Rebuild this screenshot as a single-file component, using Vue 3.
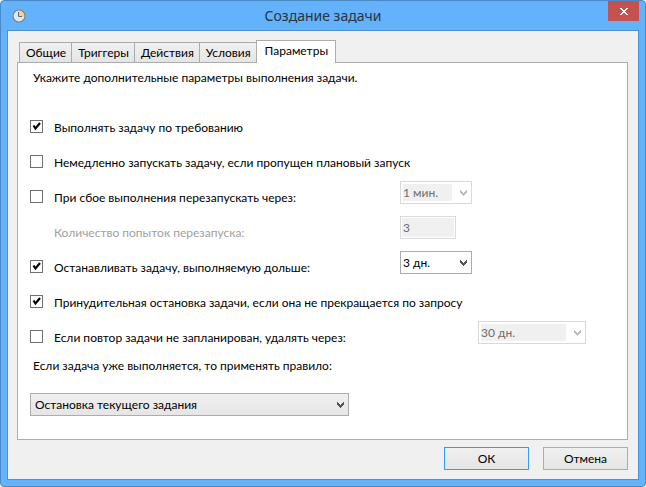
<script setup>
import { ref } from 'vue'

const tabs = ['Общие', 'Триггеры', 'Действия', 'Условия', 'Параметры']
const activeTab = ref('Параметры')

const onDemand = ref(true)
const runMissed = ref(false)
const restart = ref(false)
const stopLong = ref(true)
const forceStop = ref(true)
const removeTask = ref(false)

const restartEvery = ref('1 мин.')
const restartCount = ref('3')
const stopAfter = ref('3 дн.')
const removeAfter = ref('30 дн.')
const rule = ref('Остановка текущего задания')

const arrow = 'M0 0h1v1h1v1h1v1h1v-1h1v-1h1v-1h1v3h-1v1h-1v1h-1v1h-1v-1h-1v-1h-1v-1h-1z'
</script>

<template>
  <div class="window">
    <header class="titlebar">
      <svg class="clock" viewBox="0 0 14 14" aria-hidden="true">
        <circle cx="7" cy="7" r="6" fill="#dfe8ee" stroke="#85827c" stroke-width="1.2" />
        <path d="M7 7.500V1.800a5.200 5.200 0 0 1 5.200 5.700z" fill="#fbd07c" />
        <path d="M6.500 3v4.500H10" fill="none" stroke="#5b6a76" stroke-width="1" />
      </svg>
      <h1>Создание задачи</h1>
      <button class="close" type="button" aria-label="Закрыть">
        <svg viewBox="0 0 8 7" shape-rendering="crispEdges" aria-hidden="true">
          <path d="M0 0h2v1h1v1h2v-1h1v-1h2v1h-1v1h-1v1h-1v1h1v1h1v1h1v1h-2v-1h-1v-1h-2v1h-1v1h-2v-1h1v-1h1v-1h1v-1h-1v-1h-1v-1h-1z" fill="#fff" />
        </svg>
      </button>
    </header>

    <main class="client">
      <nav class="tabs" role="tablist">
        <button
          v-for="tab in tabs"
          :key="tab"
          type="button"
          role="tab"
          class="tab"
          :class="{ active: tab === activeTab }"
          :aria-selected="tab === activeTab"
          @click="activeTab = tab"
        >{{ tab }}</button>
      </nav>

      <section class="panel">
        <p class="intro">Укажите дополнительные параметры выполнения задачи.</p>

        <div class="row">
          <input id="onDemand" v-model="onDemand" type="checkbox">
          <label for="onDemand">Выполнять задачу по требованию</label>
        </div>
        <div class="row">
          <input id="runMissed" v-model="runMissed" type="checkbox">
          <label for="runMissed">Немедленно запускать задачу, если пропущен плановый запуск</label>
        </div>
        <div class="row">
          <input id="restart" v-model="restart" type="checkbox">
          <label for="restart" class="short">При сбое выполнения перезапускать через:</label>
          <div class="combo">
            <select v-model="restartEvery" :disabled="!restart" aria-label="Интервал перезапуска">
              <option>1 мин.</option>
            </select>
            <svg viewBox="0 0 7 6" shape-rendering="crispEdges" aria-hidden="true"><path :d="arrow" /></svg>
          </div>
        </div>
        <div class="row">
          <label for="restartCount" class="short indent" :class="{ off: !restart }">Количество попыток перезапуска:</label>
          <input id="restartCount" v-model="restartCount" class="count" type="text" :disabled="!restart">
        </div>
        <div class="row">
          <input id="stopLong" v-model="stopLong" type="checkbox">
          <label for="stopLong" class="short">Останавливать задачу, выполняемую дольше:</label>
          <div class="combo">
            <select v-model="stopAfter" :disabled="!stopLong" aria-label="Останавливать через">
              <option>3 дн.</option>
            </select>
            <svg viewBox="0 0 7 6" shape-rendering="crispEdges" aria-hidden="true"><path :d="arrow" /></svg>
          </div>
        </div>
        <div class="row">
          <input id="forceStop" v-model="forceStop" type="checkbox">
          <label for="forceStop">Принудительная остановка задачи, если она не прекращается по запросу</label>
        </div>
        <div class="row">
          <input id="removeTask" v-model="removeTask" type="checkbox">
          <label for="removeTask" class="long">Если повтор задачи не запланирован, удалять через:</label>
          <div class="combo wide">
            <select v-model="removeAfter" :disabled="!removeTask" aria-label="Удалять через">
              <option>30 дн.</option>
            </select>
            <svg viewBox="0 0 7 6" shape-rendering="crispEdges" aria-hidden="true"><path :d="arrow" /></svg>
          </div>
        </div>

        <label for="rule" class="rule-label">Если задача уже выполняется, то применять правило:</label>
        <div class="combo rule">
          <select id="rule" v-model="rule">
            <option>Остановка текущего задания</option>
          </select>
          <svg viewBox="0 0 7 6" shape-rendering="crispEdges" aria-hidden="true"><path :d="arrow" /></svg>
        </div>
      </section>

      <footer class="actions">
        <button type="button" class="btn primary">ОК</button>
        <button type="button" class="btn">Отмена</button>
      </footer>
    </main>
  </div>
</template>

<style>
body {
  background: #fff;
}
</style>

<style scoped>
.window {
  box-sizing: border-box;
  min-height: 100vh;
  display: flex;
  flex-direction: column;
  padding: 0 6px 6px;
  border: 1px solid #4a8ac6;
  border-radius: 4px;
  background: #64b1fc;
  color: #000;
  font: 12px/16px Lato, "Noto Sans", sans-serif;
}

button,
select,
input {
  box-sizing: border-box;
  margin: 0;
  font: inherit;
  color: inherit;
}

.titlebar {
  display: grid;
  grid-template-columns: 31px 1fr 31px;
  align-items: start;
  height: 29px;
}

.clock {
  width: 14px;
  height: 14px;
  margin: 8px 0 0 5px;
}

h1 {
  margin: 0;
  font-family: "Noto Sans", "Open Sans", sans-serif;
  font-size: 14px;
  line-height: 30px;
  font-weight: 400;
  text-align: center;
  color: #26353f;
}

.close {
  display: flex;
  align-items: center;
  justify-content: center;
  height: 20px;
  padding: 0;
  border: 0;
  background: #c75050;
}

.close svg {
  width: 8px;
  height: 7px;
}

.client {
  flex: 1;
  display: flex;
  flex-direction: column;
  padding: 9px 10px 9px 9px;
  border: 1px solid #4a92d6;
  background: #f0f0f0;
}

.tabs {
  display: flex;
  align-items: flex-end;
  padding-left: 2px;
}

.tab {
  height: 20px;
  padding: 0 5px 0 6px;
  border: 1px solid #acacac;
  border-bottom: 0;
  background: linear-gradient(#f0f0f0, #e5e5e5);
}

.tab + .tab {
  border-left: 0;
}

.tab.active {
  position: relative;
  height: 23px;
  margin: 0 0 -1px -1px;
  padding: 0 7px 2px 8px;
  border-left: 1px solid #acacac;
  background: #fff;
}

.panel {
  flex: 1;
  padding: 7px 12px 22px;
  border: 1px solid #acacac;
  background: #fff;
}

.intro {
  margin: 0 3px 25px;
}

.row {
  display: flex;
  align-items: flex-start;
  height: 35px;
}

.row label {
  padding: 9px 0 0 11px;
}

.row .short {
  box-sizing: border-box;
  width: 357px;
}

.row .indent {
  width: 370px;
  padding-left: 24px;
}

.row .long {
  box-sizing: border-box;
  width: 435px;
}

.off {
  color: #a0a0a0;
}

input[type="checkbox"] {
  appearance: none;
  flex: none;
  width: 13px;
  height: 13px;
  margin-top: 9px;
  border: 1px solid #707070;
  background: #fff;
}

input[type="checkbox"]:checked {
  background: url("data:image/svg+xml,%3Csvg xmlns='http://www.w3.org/2000/svg' viewBox='0 0 11 11'%3E%3Cpath d='M2.500 4.500L4.500 7.500 9 2' fill='none' stroke='%23000' stroke-width='2.200'/%3E%3C/svg%3E") center / 11px 11px no-repeat #fff;
}

.combo {
  position: relative;
  width: 72px;
  height: 23px;
}

.combo select {
  display: block;
  appearance: none;
  width: 100%;
  height: 23px;
  padding: 0 18px 0 2px;
  border: 1px solid #acacac;
  border-radius: 0;
  background: #fff;
}

.combo svg {
  position: absolute;
  top: 9px;
  right: 5px;
  width: 7px;
  height: 6px;
  fill: #555;
  pointer-events: none;
}

.combo select:disabled {
  border-color: #d9d9d9;
  background: linear-gradient(#f0f0f0, #f0f0f0) 2px 2px / calc(100% - 21px) calc(100% - 4px) no-repeat #fff;
  color: #6d6d6d;
  opacity: 1;
}

.combo select:disabled + svg {
  fill: #bfbfbf;
}

.combo.wide {
  width: 108px;
}

.count {
  width: 56px;
  height: 23px;
  padding: 0 2px;
  border: 1px solid #d9d9d9;
  background: #f0f0f0;
  box-shadow: inset 0 0 0 1px #fff;
  color: #6d6d6d;
}

.rule-label {
  display: block;
  margin: 2px 3px 19px;
}

.combo.rule {
  width: 319px;
}

.combo.rule select {
  padding-left: 4px;
  background: linear-gradient(#f0f0f0, #e5e5e5);
}

.actions {
  display: flex;
  justify-content: flex-end;
  gap: 14px;
  padding-top: 7px;
}

.btn {
  width: 85px;
  height: 23px;
  padding: 0;
  border: 1px solid #acacac;
  background: linear-gradient(#f0f0f0, #e5e5e5);
}

.btn.primary {
  border-color: #3399ff;
}
</style>
